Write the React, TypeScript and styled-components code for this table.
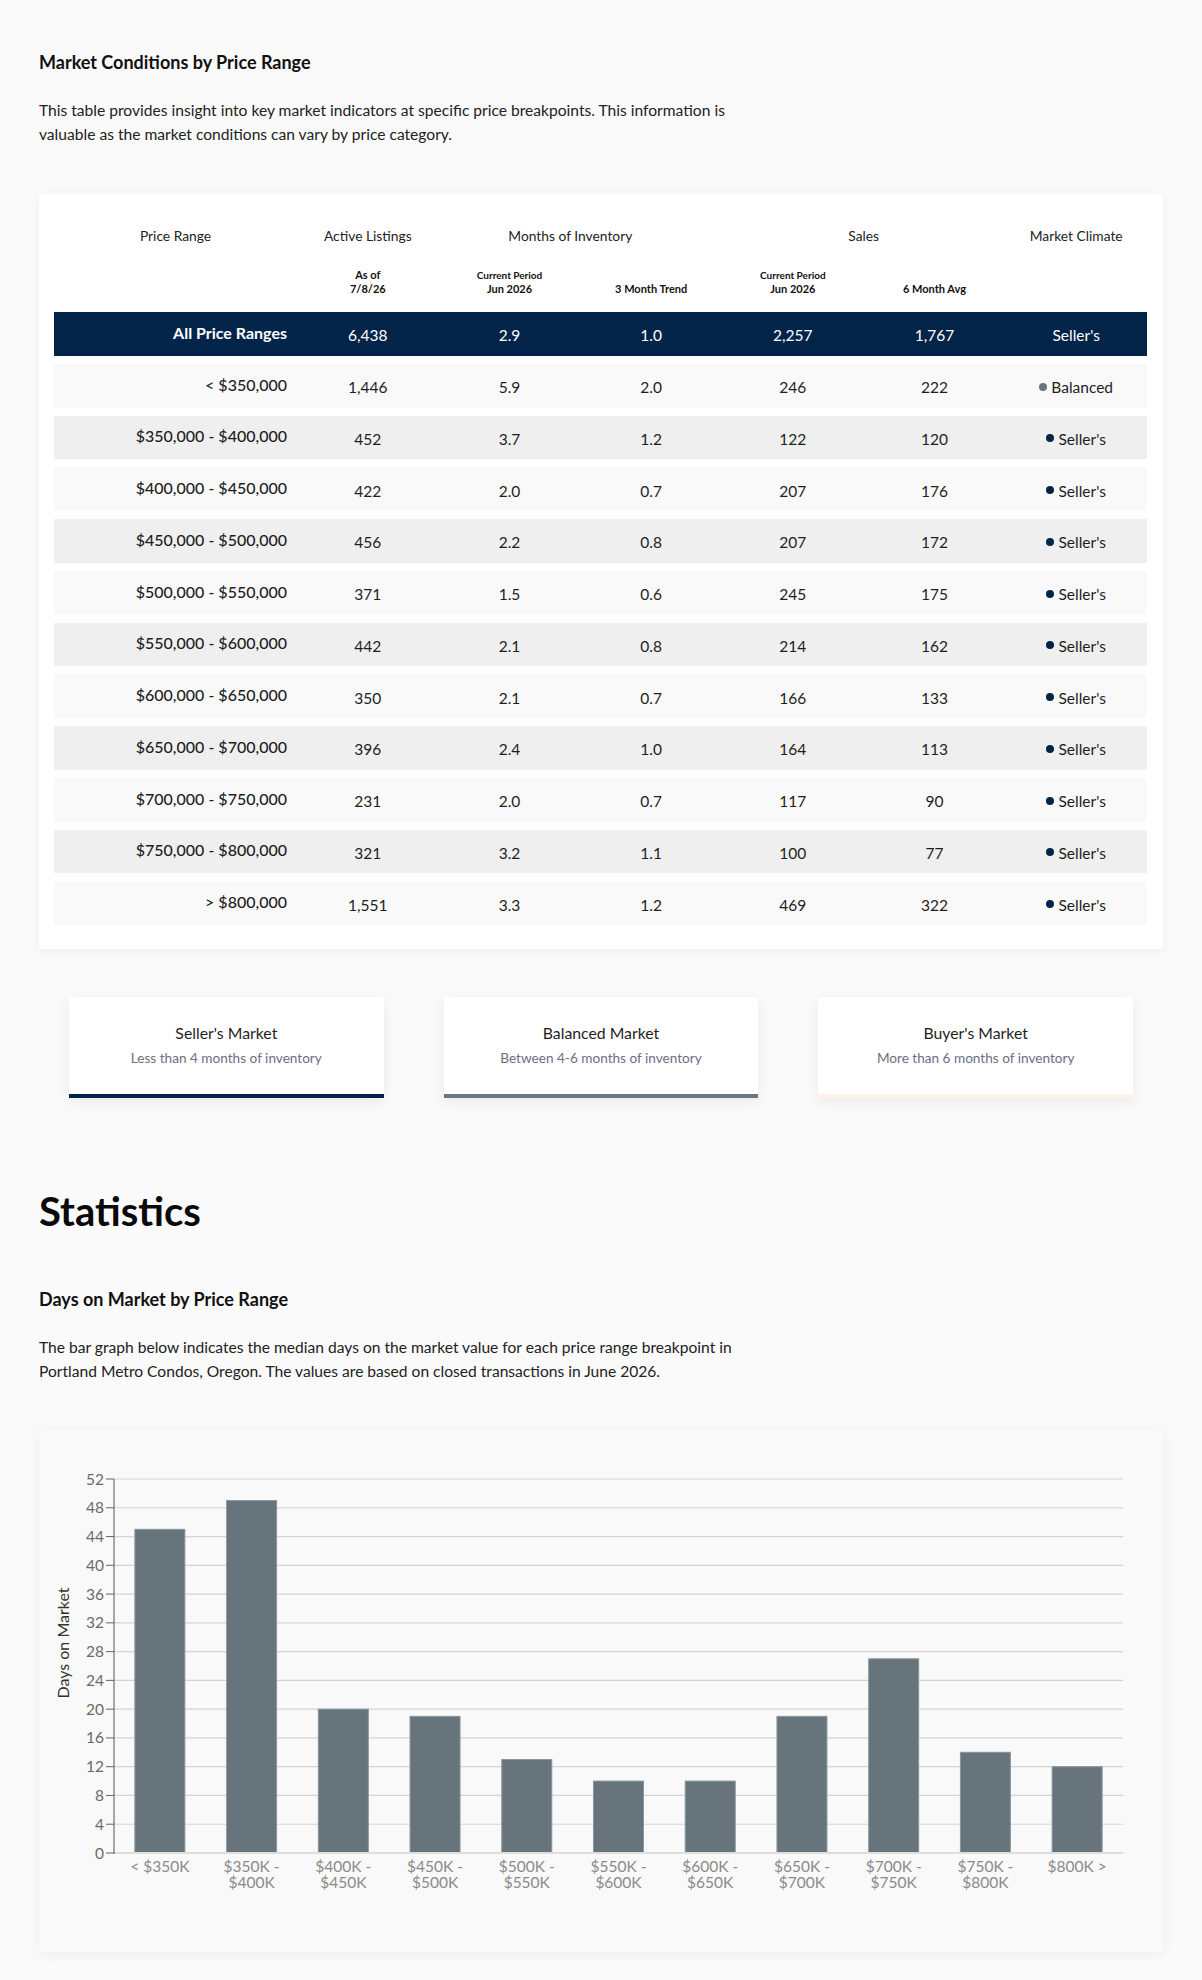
import React from "react";
import styled, { createGlobalStyle } from "styled-components";

const GlobalStyle = createGlobalStyle`
  html, body {
    margin: 0;
    padding: 0;
    background: #fafafa;
    font-family: Lato, "Open Sans", Arial, sans-serif;
    color: #1e1e1e;
  }
  * { box-sizing: border-box; }
`;

const NAVY = "#022449";
const SLATE = "#68747c";

const Page = styled.div`
  width: 1202px;
  padding: 52px 39px 29px;
`;

const SectionTitle = styled.h3<{ $gap?: number }>`
  margin: ${(p) => p.$gap ?? 0}px 0 0;
  font-size: 18px;
  line-height: 20px;
  font-weight: 700;
  color: #111;
`;

const Intro = styled.p`
  margin: 26px 0 0;
  font-size: 15.6px;
  line-height: 24px;
  font-weight: 400;
  color: #222;
`;

const TableCard = styled.div`
  margin-top: 48px;
  background: #fff;
  padding: 34px 16px 24px 15px;
  box-shadow: 0 2px 12px rgba(0, 0, 0, 0.05);
`;

const Grid = styled.div`
  display: grid;
  grid-template-columns: 243px repeat(6, 1fr);
`;

const HeadRow = styled(Grid)`
  font-size: 13.8px;
  line-height: 16px;
  color: #222;
  text-align: center;
`;

const HeadCell = styled.div<{ $span?: number; $nudge?: number }>`
  grid-column: span ${(p) => p.$span ?? 1};
  padding-right: ${(p) => p.$nudge ?? 0}px;
`;

const SubHeadRow = styled(Grid)`
  margin: 24px 0 16px;
  height: 28px;
  align-items: end;
  text-align: center;
  font-weight: 700;
  font-size: 11px;
  line-height: 14px;
  color: #111;
`;

const SubSmall = styled.div`
  font-size: 10px;
  line-height: 14px;
`;

const Row = styled(Grid)<{ $tone: "total" | "light" | "dark" }>`
  height: 43.75px;
  margin-top: ${(p) => (p.$tone === "total" ? 0 : 8)}px;
  align-items: center;
  text-align: center;
  font-size: 15.5px;
  background: ${(p) =>
    p.$tone === "total" ? NAVY : p.$tone === "light" ? "#f9f9f9" : "#efefef"};
  color: ${(p) => (p.$tone === "total" ? "#fff" : "#1e1e1e")};
`;

const Label = styled.div<{ $total?: boolean }>`
  text-align: right;
  padding: 0 10px 3px 0;
  font-size: 16px;
  font-weight: ${(p) => (p.$total ? 700 : 500)};
`;

const Value = styled.div`
  padding-top: 3px;
`;

const Climate = styled.div`
  padding-top: 3px;
  display: flex;
  align-items: center;
  justify-content: center;
  gap: 4px;
`;

const Dot = styled.span<{ $color: string }>`
  width: 8px;
  height: 8px;
  border-radius: 50%;
  background: ${(p) => p.$color};
  margin-bottom: 1px;
`;

const Legend = styled.div`
  margin-top: 48px;
  padding: 0 30px;
  display: grid;
  grid-template-columns: repeat(3, 1fr);
  gap: 60px;
`;

const LegendCard = styled.div<{ $accent: string }>`
  height: 101px;
  padding-top: 27px;
  background: #fff;
  text-align: center;
  border-bottom: 4px solid ${(p) => p.$accent};
  box-shadow: 0 4px 14px rgba(0, 0, 0, 0.07);
`;

const LegendTitle = styled.div`
  font-size: 15.8px;
  line-height: 18px;
  color: #1e1e1e;
`;

const LegendSub = styled.div`
  margin-top: 8px;
  font-size: 13.6px;
  line-height: 16px;
  color: #6e6e82;
`;

const PageHeading = styled.h2`
  margin: 91px 0 0;
  font-size: 40px;
  line-height: 44px;
  font-weight: 700;
  color: #0a0a0a;
`;

const ChartCard = styled.div`
  margin-top: 47px;
  height: 522px;
  background: #f9f9f9;
  box-shadow: 0 2px 14px rgba(0, 0, 0, 0.06);
`;

type Climate = "Seller's" | "Balanced";

const rows: { label: string; vals: string[]; climate: Climate }[] = [
  { label: "< $350,000", vals: ["1,446", "5.9", "2.0", "246", "222"], climate: "Balanced" },
  { label: "$350,000 - $400,000", vals: ["452", "3.7", "1.2", "122", "120"], climate: "Seller's" },
  { label: "$400,000 - $450,000", vals: ["422", "2.0", "0.7", "207", "176"], climate: "Seller's" },
  { label: "$450,000 - $500,000", vals: ["456", "2.2", "0.8", "207", "172"], climate: "Seller's" },
  { label: "$500,000 - $550,000", vals: ["371", "1.5", "0.6", "245", "175"], climate: "Seller's" },
  { label: "$550,000 - $600,000", vals: ["442", "2.1", "0.8", "214", "162"], climate: "Seller's" },
  { label: "$600,000 - $650,000", vals: ["350", "2.1", "0.7", "166", "133"], climate: "Seller's" },
  { label: "$650,000 - $700,000", vals: ["396", "2.4", "1.0", "164", "113"], climate: "Seller's" },
  { label: "$700,000 - $750,000", vals: ["231", "2.0", "0.7", "117", "90"], climate: "Seller's" },
  { label: "$750,000 - $800,000", vals: ["321", "3.2", "1.1", "100", "77"], climate: "Seller's" },
  { label: "> $800,000", vals: ["1,551", "3.3", "1.2", "469", "322"], climate: "Seller's" },
];

const bars: { label: string[]; days: number }[] = [
  { label: ["< $350K"], days: 45 },
  { label: ["$350K -", "$400K"], days: 49 },
  { label: ["$400K -", "$450K"], days: 20 },
  { label: ["$450K -", "$500K"], days: 19 },
  { label: ["$500K -", "$550K"], days: 13 },
  { label: ["$550K -", "$600K"], days: 10 },
  { label: ["$600K -", "$650K"], days: 10 },
  { label: ["$650K -", "$700K"], days: 19 },
  { label: ["$700K -", "$750K"], days: 27 },
  { label: ["$750K -", "$800K"], days: 14 },
  { label: ["$800K >"], days: 12 },
];

const DaysChart = () => {
  const left = 75;
  const right = 1084;
  const top = 49;
  const bottom = 423;
  const max = 52;
  const band = (right - left) / bars.length;
  const y = (v: number) => bottom - ((bottom - top) * v) / max;
  const ticks = Array.from({ length: 14 }, (_, i) => i * 4);

  return (
    <svg width="100%" height="522" viewBox="0 0 1124 522" fontFamily="Lato, sans-serif">
      {ticks.map((t) => (
        <g key={t}>
          {t > 0 && (
            <line x1={left} x2={right} y1={y(t)} y2={y(t)} stroke="#d4d4d4" strokeWidth="1.2" />
          )}
          <line x1={left - 8} x2={left} y1={y(t)} y2={y(t)} stroke="#666" strokeWidth="1" />
          <text x={left - 10} y={y(t) + 5.5} textAnchor="end" fontSize="15.5" fill="#6a6a6a">
            {t}
          </text>
        </g>
      ))}
      {bars.map((b, i) => {
        const cx = left + band * (i + 0.5);
        return (
          <g key={i}>
            <rect
              x={cx - 25}
              y={y(b.days)}
              width="50"
              height={bottom - y(b.days)}
              fill={SLATE}
              stroke="#8b959b"
              strokeWidth="1"
            />
            {b.label.map((l, j) => (
              <text
                key={j}
                x={cx}
                y={442 + j * 16}
                textAnchor="middle"
                fontSize="15.5"
                fill="#8a8a8a"
              >
                {l}
              </text>
            ))}
          </g>
        );
      })}
      <line x1={left} x2={right} y1={bottom} y2={bottom} stroke="#dedede" strokeWidth="2" />
      <line x1={left} x2={left} y1={top} y2={bottom + 1} stroke="#555" strokeWidth="1" />
      <text
        transform={`translate(30 213) rotate(-90)`}
        textAnchor="middle"
        fontSize="16"
        fill="#333"
      >
        Days on Market
      </text>
    </svg>
  );
};

const App = () => (
  <Page>
    <GlobalStyle />
    <SectionTitle>Market Conditions by Price Range</SectionTitle>
    <Intro>
      This table provides insight into key market indicators at specific price breakpoints. This information is
      <br />
      valuable as the market conditions can vary by price category.
    </Intro>

    <TableCard>
      <HeadRow>
        <HeadCell>Price Range</HeadCell>
        <HeadCell>Active Listings</HeadCell>
        <HeadCell $span={2} $nudge={20}>
          Months of Inventory
        </HeadCell>
        <HeadCell $span={2}>Sales</HeadCell>
        <HeadCell>Market Climate</HeadCell>
      </HeadRow>
      <SubHeadRow>
        <div />
        <div>
          As of
          <br />
          7/8/26
        </div>
        <div>
          <SubSmall>Current Period</SubSmall>
          Jun 2026
        </div>
        <div>3 Month Trend</div>
        <div>
          <SubSmall>Current Period</SubSmall>
          Jun 2026
        </div>
        <div>6 Month Avg</div>
        <div />
      </SubHeadRow>

      <Row $tone="total">
        <Label $total>All Price Ranges</Label>
        {["6,438", "2.9", "1.0", "2,257", "1,767"].map((v, i) => (
          <Value key={i}>{v}</Value>
        ))}
        <Climate>Seller's</Climate>
      </Row>
      {rows.map((r, i) => (
        <Row key={r.label} $tone={i % 2 === 0 ? "light" : "dark"}>
          <Label>{r.label}</Label>
          {r.vals.map((v, j) => (
            <Value key={j}>{v}</Value>
          ))}
          <Climate>
            <Dot $color={r.climate === "Balanced" ? "#6b767e" : NAVY} />
            {r.climate}
          </Climate>
        </Row>
      ))}
    </TableCard>

    <Legend>
      <LegendCard $accent={NAVY}>
        <LegendTitle>Seller's Market</LegendTitle>
        <LegendSub>Less than 4 months of inventory</LegendSub>
      </LegendCard>
      <LegendCard $accent="#6b767e">
        <LegendTitle>Balanced Market</LegendTitle>
        <LegendSub>Between 4-6 months of inventory</LegendSub>
      </LegendCard>
      <LegendCard $accent="#fcf4ec">
        <LegendTitle>Buyer's Market</LegendTitle>
        <LegendSub>More than 6 months of inventory</LegendSub>
      </LegendCard>
    </Legend>

    <PageHeading>Statistics</PageHeading>
    <SectionTitle $gap={56}>Days on Market by Price Range</SectionTitle>
    <Intro>
      The bar graph below indicates the median days on the market value for each price range breakpoint in
      <br />
      Portland Metro Condos, Oregon. The values are based on closed transactions in June 2026.
    </Intro>

    <ChartCard>
      <DaysChart />
    </ChartCard>
  </Page>
);

export default App;
